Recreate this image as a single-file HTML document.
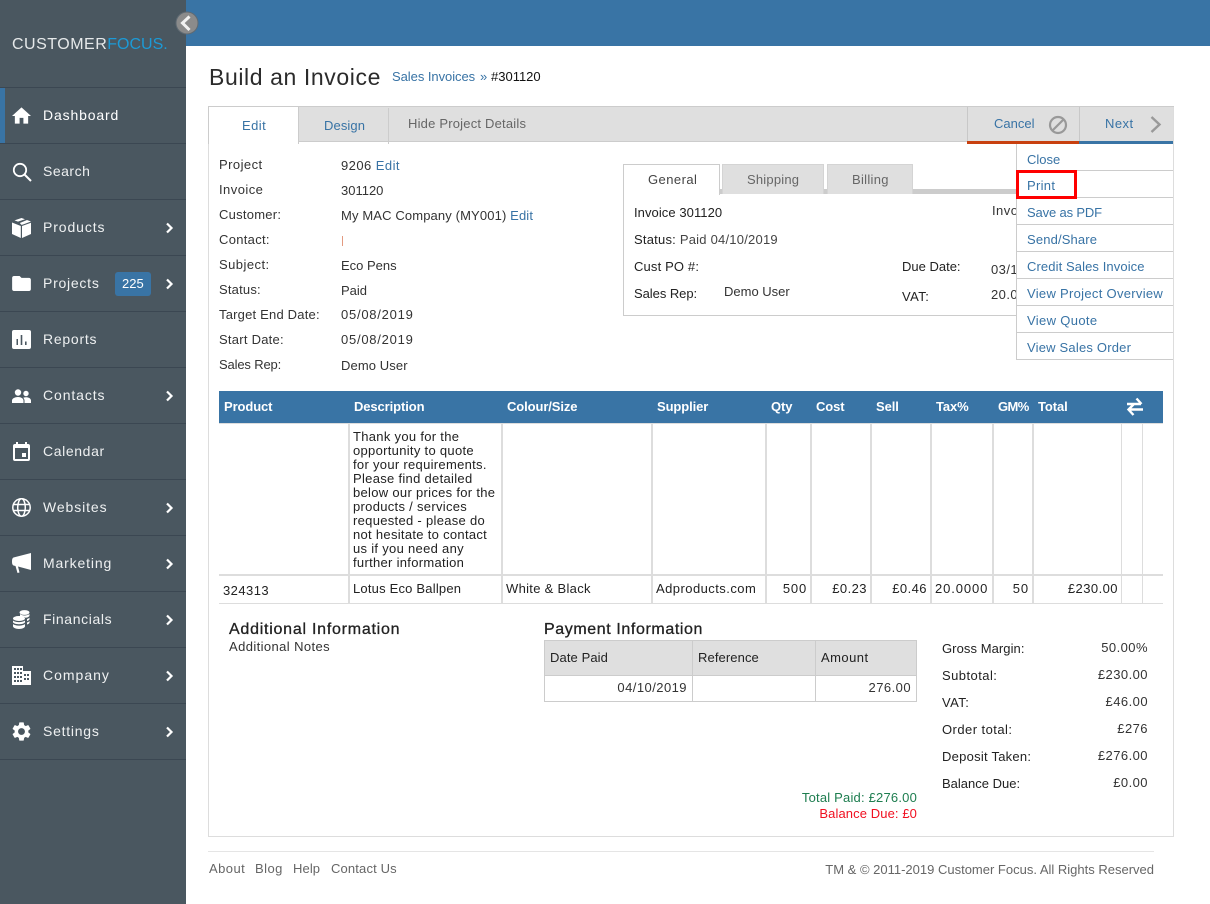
<!DOCTYPE html>
<html><head><meta charset="utf-8"><style>
html,body{margin:0;padding:0;background:#fff}
body{width:1210px;height:904px;position:relative;overflow:hidden;font:13px/16px "Liberation Sans",sans-serif;color:#333}
.t,.r,.b,.n,.i{position:absolute;white-space:nowrap}
.t{letter-spacing:.45px}
.r{letter-spacing:.45px;text-align:right}
.b{background:#ddd}
.l{color:#3873a5}
.h{color:#fff;font-weight:bold;letter-spacing:-.1px}
.n{left:43px;color:#eef0f1;font-size:14px;letter-spacing:.8px;line-height:16px}
.i{left:12px;fill:#fff}
.c{position:absolute;left:165px;width:9px;height:14px}
.s{position:absolute;left:0;width:186px;height:1px;background:#3b4752}
.d{position:absolute;left:1017px;width:156px;height:1px;background:#ccc}
.dt{position:absolute;left:1027px;color:#3873a5;letter-spacing:.2px;white-space:nowrap}
</style></head><body>
<div class="b" style="left:0;top:0;width:186px;height:904px;background:#4a5760"></div>
<div class="b" style="left:186px;top:0;width:1024px;height:46px;background:#3974a5"></div>
<svg class="i" style="left:174px;top:10px;fill:none" width="26" height="26" viewBox="0 0 26 26"><circle cx="13" cy="13" r="11" fill="#8b8b8b" stroke="#5f6a73" stroke-width="1"/><path d="M15.500 6.500L8.500 13l7 7" fill="none" stroke="#f2f2f2" stroke-width="3"/></svg>
<div class="t" style="left:12px;top:36px;font-size:16px;line-height:18px;letter-spacing:.5px;color:#e6e9ea">CUSTOMER<span style="color:#1c9ad6;letter-spacing:0">FOCUS.</span></div>

<div class="s" style="top:87px"></div><div class="s" style="top:143px"></div><div class="s" style="top:199px"></div><div class="s" style="top:255px"></div><div class="s" style="top:311px"></div><div class="s" style="top:367px"></div><div class="s" style="top:423px"></div><div class="s" style="top:479px"></div><div class="s" style="top:535px"></div><div class="s" style="top:591px"></div><div class="s" style="top:647px"></div><div class="s" style="top:703px"></div><div class="s" style="top:759px"></div>
<div class="b" style="left:0;top:88px;width:5px;height:55px;background:#3974a5"></div>

<svg class="i" style="top:107px" width="19" height="17" viewBox="2 3 20 17"><path d="M10 20v-6h4v6h5v-8h3L12 3 2 12h3v8z"/></svg>
<svg class="i" style="top:162px;fill:none" width="20" height="20" viewBox="0 0 20 20"><circle cx="8" cy="8" r="6.200" fill="none" stroke="#fff" stroke-width="1.800"/><path d="M12.500 12.500L19 19" stroke="#fff" stroke-width="2"/></svg>
<svg class="i" style="top:218px" width="19" height="20" viewBox="0 0 19 20"><path d="M9.500 0L13 1.200 6 3.600 2.500 2.400zM15 2l4 1.500L11 6.500 9.500 6.900 7.800 5z"/><path d="M0 4.500L8.800 8v12L0 16zM19 4.800V16l-9 4V8z"/></svg>
<svg class="i" style="top:276px" width="19" height="15" viewBox="2 4 20 16"><path d="M10 4H4c-1.100 0-2 .9-2 2v12c0 1.100.9 2 2 2h16c1.100 0 2-.9 2-2V8c0-1.100-.9-2-2-2h-8z"/></svg>
<svg class="i" style="top:330px" width="19" height="19" viewBox="0 0 19 19"><path fill-rule="evenodd" d="M2 0h15a2 2 0 0 1 2 2v15a2 2 0 0 1-2 2H2a2 2 0 0 1-2-2V2a2 2 0 0 1 2-2zM4.500 9v6H6V9zM8.700 5v10h1.600V5zM13 11.500V15h1.600v-3.500z"/></svg>
<svg class="i" style="top:389px" width="19" height="14" viewBox="0 0 19 14"><circle cx="6" cy="3.500" r="3.200"/><circle cx="14" cy="4.500" r="2.700"/><path d="M0 14v-2.500C0 9.500 3 8 6 8s5.500 1.500 5.500 3.500V14zM12.500 14v-2.500c0-1-.5-2-1.300-2.800.8-.3 1.800-.5 2.800-.5 2.700 0 5 1.300 5 3.300V14z"/></svg>
<svg class="i" style="left:13px;top:442px" width="17" height="19" viewBox="0 0 17 19"><path fill-rule="evenodd" d="M3 0h2v2h7V0h2v2h1a2 2 0 0 1 2 2v13a2 2 0 0 1-2 2H2a2 2 0 0 1-2-2V4a2 2 0 0 1 2-2h1zM2 6v11h13V6zM9 11h4v4H9z"/></svg>
<svg class="i" style="top:498px;fill:none" width="19" height="19" viewBox="0 0 19 19" fill="none" stroke="#fff" stroke-width="1.500"><circle cx="9.500" cy="9.500" r="8.700"/><ellipse cx="9.500" cy="9.500" rx="3.800" ry="8.700"/><path d="M1.500 6.500h16M1.500 12.500h16"/></svg>
<svg class="i" style="top:553px" width="19" height="20" viewBox="0 0 19 20"><path d="M19 0v17L6 13.500 7.500 19.500 5.500 20 3.500 13 1.500 12.500C.5 12 0 11 0 8.500S.5 5 1.500 4.500z"/></svg>
<svg class="i" style="left:13px;top:610px" width="17" height="19" viewBox="0 0 17 19"><ellipse cx="11.500" cy="2.500" rx="5" ry="2.400"/><path d="M16.500 4v1.500c0 1-1.500 2-4 2.300C11.500 7 9 6.700 7 6.500V4c1 1 3 1.500 4.500 1.500S15.500 5 16.500 4zM16.500 7.500V9c0 .8-1 1.500-2.500 2V9c1.200-.3 2-.8 2.500-1.500zM16.500 11v1.500c0 .8-1 1.500-2.500 2v-2c1.200-.3 2-.8 2.500-1.500z"/><ellipse cx="6" cy="8.500" rx="6" ry="2.500"/><path d="M0 10.500c1 1 3.500 1.600 6 1.600s5-.6 6-1.600V12c0 1.200-2.700 2.200-6 2.200S0 13.200 0 12zM0 14c1 1 3.500 1.600 6 1.600s5-.6 6-1.600v2.300C12 17.800 9.300 19 6 19s-6-1.200-6-2.700z"/></svg>
<svg class="i" style="top:666px" width="19" height="19" viewBox="0 0 19 19"><path fill-rule="evenodd" d="M0 0h11v5h8v14H0zM2 2v2h2V2zM5 2v2h2V2zM8 2v2h2V2zM2 6v2h2V6zM5 6v2h2V6zM8 6v2h2V6zM2 10v2h2v-2zM5 10v2h2v-2zM8 10v2h2v-2zM2 14v2h2v-2zM5 14v2h2v-2zM8 14v2h2v-2zM12 8v2h2V8zM15 8v2h2V8zM12 12v2h2v-2zM15 12v2h2v-2z"/></svg>
<svg class="i" style="top:722px" width="19" height="19" viewBox="2.500 2 19 20"><path d="M19.140 12.940c.04-.3.06-.61.06-.94 0-.32-.02-.64-.07-.94l2.030-1.580c.18-.14.23-.41.12-.61l-1.920-3.320c-.12-.22-.37-.29-.59-.22l-2.390.96c-.5-.38-1.030-.7-1.620-.94l-.36-2.540c-.04-.24-.24-.41-.48-.41h-3.840c-.24 0-.43.17-.47.41l-.36 2.540c-.59.24-1.130.57-1.620.94l-2.390-.96c-.22-.08-.47 0-.59.22L2.740 8.870c-.12.21-.08.47.12.61l2.030 1.580c-.05.3-.09.63-.09.94s.02.64.07.94l-2.030 1.580c-.18.14-.23.41-.12.61l1.920 3.320c.12.22.37.29.59.22l2.390-.96c.5.38 1.030.7 1.620.94l.36 2.540c.05.24.24.41.48.41h3.840c.24 0 .44-.17.47-.41l.36-2.540c.59-.24 1.130-.56 1.620-.94l2.390.96c.22.08.47 0 .59-.22l1.920-3.320c.12-.22.07-.47-.12-.61l-2.010-1.580zM12 15.600c-1.980 0-3.600-1.620-3.600-3.600s1.620-3.600 3.600-3.600 3.600 1.620 3.600 3.600-1.620 3.600-3.600 3.600z"/></svg>

<div class="n" style="top:107px;color:#fff;letter-spacing:.85px">Dashboard</div>
<div class="n" style="top:163px;letter-spacing:.5px">Search</div>
<div class="n" style="top:219px;letter-spacing:.9px">Products</div>
<div class="n" style="top:275px;letter-spacing:.75px">Projects</div>
<div class="n" style="top:331px;letter-spacing:.75px">Reports</div>
<div class="n" style="top:387px;letter-spacing:.9px">Contacts</div>
<div class="n" style="top:443px;letter-spacing:.62px">Calendar</div>
<div class="n" style="top:499px;letter-spacing:.9px">Websites</div>
<div class="n" style="top:555px;letter-spacing:.85px">Marketing</div>
<div class="n" style="top:611px;letter-spacing:.62px">Financials</div>
<div class="n" style="top:667px;letter-spacing:1px">Company</div>
<div class="n" style="top:723px;letter-spacing:.75px">Settings</div>
<div class="b" style="left:115px;top:272px;width:36px;height:24px;background:#3974a5;border-radius:3px"></div>
<div class="t" style="left:122px;top:276px;color:#fff;letter-spacing:0">225</div>
<svg class="c" style="top:221px" viewBox="0 0 9 14"><path d="M2 2.500L6.500 7 2 11.500" fill="none" stroke="#fff" stroke-width="2.200"/></svg>
<svg class="c" style="top:277px" viewBox="0 0 9 14"><path d="M2 2.500L6.500 7 2 11.500" fill="none" stroke="#fff" stroke-width="2.200"/></svg>
<svg class="c" style="top:389px" viewBox="0 0 9 14"><path d="M2 2.500L6.500 7 2 11.500" fill="none" stroke="#fff" stroke-width="2.200"/></svg>
<svg class="c" style="top:501px" viewBox="0 0 9 14"><path d="M2 2.500L6.500 7 2 11.500" fill="none" stroke="#fff" stroke-width="2.200"/></svg>
<svg class="c" style="top:557px" viewBox="0 0 9 14"><path d="M2 2.500L6.500 7 2 11.500" fill="none" stroke="#fff" stroke-width="2.200"/></svg>
<svg class="c" style="top:613px" viewBox="0 0 9 14"><path d="M2 2.500L6.500 7 2 11.500" fill="none" stroke="#fff" stroke-width="2.200"/></svg>
<svg class="c" style="top:669px" viewBox="0 0 9 14"><path d="M2 2.500L6.500 7 2 11.500" fill="none" stroke="#fff" stroke-width="2.200"/></svg>
<svg class="c" style="top:725px" viewBox="0 0 9 14"><path d="M2 2.500L6.500 7 2 11.500" fill="none" stroke="#fff" stroke-width="2.200"/></svg>

<div class="t" style="left:209px;top:63px;font-size:23px;line-height:28px;letter-spacing:.6px;color:#2b2b2b">Build an Invoice</div>
<div class="t l" style="left:392px;top:69px;letter-spacing:-.05px">Sales Invoices</div>
<div class="t" style="left:480px;top:69px;color:#3873a5">»</div>
<div class="t" style="left:491px;top:69px;color:#111;letter-spacing:0">#301120</div>

<!-- panel -->
<div class="b" style="left:208px;top:106px;width:964px;height:729px;background:#fff;border:1px solid #ddd"></div>
<div class="b" style="left:209px;top:107px;width:964px;height:34px;background:#dfdfdf"></div>
<div class="b" style="left:298px;top:141px;width:875px;height:1px;background:#ccc"></div>
<div class="b" style="left:208px;top:106px;width:966px;height:1px;background:#ccc"></div>
<div class="b" style="left:209px;top:107px;width:89px;height:36px;background:#fff"></div>
<div class="b" style="left:208px;top:106px;width:1px;height:38px;background:#ccc"></div>
<div class="b" style="left:298px;top:107px;width:1px;height:37px;background:#ccc"></div>
<div class="b" style="left:388px;top:108px;width:1px;height:36px;background:#ccc"></div>
<div class="t l" style="left:242px;top:118px">Edit</div>
<div class="t l" style="left:324px;top:118px;letter-spacing:.1px">Design</div>
<div class="t" style="left:408px;top:116px;color:#666;letter-spacing:.2px">Hide Project Details</div>
<div class="b" style="left:967px;top:107px;width:1px;height:34px;background:#c8c8c8"></div>
<div class="b" style="left:1079px;top:107px;width:1px;height:34px;background:#c8c8c8"></div>
<div class="b" style="left:967px;top:141px;width:112px;height:3px;background:#c8400f"></div>
<div class="b" style="left:1079px;top:141px;width:94px;height:3px;background:#3974a5"></div>
<div class="t l" style="left:994px;top:116px;letter-spacing:0">Cancel</div>
<svg class="i" style="left:1048px;top:115px;fill:none" width="20" height="20" viewBox="0 0 20 20" stroke="#999" stroke-width="2.200"><circle cx="10" cy="10" r="8"/><path d="M4.500 15.500L15.500 4.500"/></svg>
<div class="t l" style="left:1105px;top:116px">Next</div>
<svg class="i" style="left:1150px;top:116px;fill:none" width="12" height="17" viewBox="0 0 12 17" stroke="#999" stroke-width="2.400"><path d="M1.500 1l8 7.500-8 7.500"/></svg>

<!-- left fields -->
<div class="t" style="left:219px;top:157px">Project</div><div class="t" style="left:341px;top:158px">9206 <span class="l">Edit</span></div>
<div class="t" style="left:219px;top:182px">Invoice</div><div class="t" style="left:341px;top:183px;letter-spacing:0">301120</div>
<div class="t" style="left:219px;top:207px;letter-spacing:.25px">Customer:</div><div class="t" style="left:341px;top:208px;letter-spacing:.13px">My MAC Company (MY001) <span class="l">Edit</span></div>
<div class="t" style="left:219px;top:232px;letter-spacing:.3px">Contact:</div><div class="b" style="left:342px;top:236px;width:1px;height:10px;background:#e39a80"></div>
<div class="t" style="left:219px;top:257px">Subject:</div><div class="t" style="left:341px;top:258px;letter-spacing:0">Eco Pens</div>
<div class="t" style="left:219px;top:282px;letter-spacing:.2px">Status:</div><div class="t" style="left:341px;top:283px;letter-spacing:0">Paid</div>
<div class="t" style="left:219px;top:307px;letter-spacing:.2px">Target End Date:</div><div class="t" style="left:341px;top:307px;letter-spacing:.75px">05/08/2019</div>
<div class="t" style="left:219px;top:332px;letter-spacing:.25px">Start Date:</div><div class="t" style="left:341px;top:332px;letter-spacing:.75px">05/08/2019</div>
<div class="t" style="left:219px;top:357px;letter-spacing:-.15px">Sales Rep:</div><div class="t" style="left:341px;top:358px;letter-spacing:.1px">Demo User</div>

<!-- sub tabs -->
<div class="b" style="left:623px;top:193px;width:393px;height:122px;background:#fff;border:1px solid #ccc;border-top:0"></div>
<div class="b" style="left:623px;top:189px;width:393px;height:5px;background:#ccc"></div>
<div class="b" style="left:623px;top:164px;width:95px;height:30px;background:#fff;border:1px solid #ccc;border-bottom:0"></div>
<div class="b" style="left:722px;top:164px;width:100px;height:29px;background:#dfdfdf;border:1px solid #d4d4d4;border-bottom:0"></div>
<div class="b" style="left:827px;top:164px;width:84px;height:29px;background:#dfdfdf;border:1px solid #d4d4d4;border-bottom:0"></div>
<div class="t" style="left:648px;top:172px;color:#444">General</div>
<div class="t" style="left:747px;top:172px;color:#666;letter-spacing:.2px">Shipping</div>
<div class="t" style="left:852px;top:172px;color:#666;letter-spacing:.3px">Billing</div>
<div class="t" style="left:634px;top:205px;color:#222;letter-spacing:.07px">Invoice 301120</div>
<div class="t" style="left:634px;top:232px;color:#222;letter-spacing:.22px">Status: <span style="color:#444">Paid 04/10/2019</span></div>
<div class="t" style="left:634px;top:259px;color:#222;letter-spacing:.15px">Cust PO #:</div>
<div class="t" style="left:634px;top:286px;color:#222;letter-spacing:-.05px">Sales Rep:</div>
<div class="t" style="left:724px;top:284px;letter-spacing:0">Demo User</div>
<div class="t" style="left:902px;top:259px;color:#222;letter-spacing:0">Due Date:</div>
<div class="t" style="left:902px;top:289px;color:#222">VAT:</div>
<div class="t" style="left:992px;top:203px">Invoice</div>
<div class="t" style="left:991px;top:262px">03/10/2019</div>
<div class="t" style="left:991px;top:287px">20.00</div>

<!-- dropdown -->
<div class="b" style="left:1016px;top:144px;width:157px;height:215px;background:#fff;border-left:1px solid #ccc;border-bottom:1px solid #ccc"></div>
<div class="b" style="left:1173px;top:144px;width:1px;height:216px;background:#ddd"></div>
<div class="d" style="top:170px"></div><div class="d" style="top:197px"></div><div class="d" style="top:224px"></div><div class="d" style="top:251px"></div><div class="d" style="top:278px"></div><div class="d" style="top:305px"></div><div class="d" style="top:332px"></div>
<div class="dt" style="top:152px;letter-spacing:0">Close</div>
<div class="dt" style="top:178px;letter-spacing:.3px">Print</div>
<div class="dt" style="top:205px;letter-spacing:-.15px">Save as PDF</div>
<div class="dt" style="top:232px;letter-spacing:.15px">Send/Share</div>
<div class="dt" style="top:259px;letter-spacing:.1px">Credit Sales Invoice</div>
<div class="dt" style="top:286px;letter-spacing:.3px">View Project Overview</div>
<div class="dt" style="top:313px;letter-spacing:.35px">View Quote</div>
<div class="dt" style="top:340px;letter-spacing:.2px">View Sales Order</div>
<div class="b" style="left:1016px;top:170px;width:55px;height:23px;background:none;border:3px solid #f00"></div>

<!-- table -->
<div class="b" style="left:219px;top:391px;width:944px;height:32px;background:#3974a5"></div>
<div class="t h" style="left:224px;top:399px">Product</div>
<div class="t h" style="left:354px;top:399px">Description</div>
<div class="t h" style="left:507px;top:399px">Colour/Size</div>
<div class="t h" style="left:657px;top:399px">Supplier</div>
<div class="t h" style="left:771px;top:399px">Qty</div>
<div class="t h" style="left:816px;top:399px">Cost</div>
<div class="t h" style="left:876px;top:399px">Sell</div>
<div class="t h" style="left:936px;top:399px">Tax%</div>
<div class="t h" style="left:998px;top:399px;letter-spacing:-.6px">GM%</div>
<div class="t h" style="left:1038px;top:399px">Total</div>
<svg class="i" style="left:1126px;top:397px;fill:none" width="18" height="19" viewBox="0 0 18 19" stroke="#fff" stroke-width="2.400"><path d="M1 7h14M10.500 1.500L15.500 7M17 12.500H3M7.500 7.500L2.500 12.500 7.500 18"/></svg>
<div class="b" style="left:219px;top:423px;width:944px;height:1px"></div>
<div class="b" style="left:219px;top:574px;width:944px;height:2px"></div>
<div class="b" style="left:219px;top:603px;width:944px;height:1px"></div>
<div class="b" style="left:348px;top:424px;width:2px;height:179px"></div>
<div class="b" style="left:501px;top:424px;width:2px;height:179px"></div>
<div class="b" style="left:651px;top:424px;width:2px;height:179px"></div>
<div class="b" style="left:765px;top:424px;width:2px;height:179px"></div>
<div class="b" style="left:810px;top:424px;width:2px;height:179px"></div>
<div class="b" style="left:870px;top:424px;width:2px;height:179px"></div>
<div class="b" style="left:930px;top:424px;width:2px;height:179px"></div>
<div class="b" style="left:992px;top:424px;width:2px;height:179px"></div>
<div class="b" style="left:1032px;top:424px;width:2px;height:179px"></div>
<div class="b" style="left:1121px;top:424px;width:1px;height:179px"></div>
<div class="b" style="left:1142px;top:424px;width:1px;height:179px"></div>
<div class="t" style="left:353px;top:430px;line-height:14px;color:#222;letter-spacing:.3px">Thank you for the<br>opportunity to quote<br>for your requirements.<br>Please find detailed<br>below our prices for the<br>products / services<br>requested - please do<br>not hesitate to contact<br>us if you need any<br>further information</div>
<div class="t" style="left:223px;top:583px;color:#222">324313</div>
<div class="t" style="left:353px;top:581px;color:#222;letter-spacing:.2px">Lotus Eco Ballpen</div>
<div class="t" style="left:506px;top:581px;color:#222;letter-spacing:.3px">White &amp; Black</div>
<div class="t" style="left:656px;top:581px;color:#222">Adproducts.com</div>
<div class="r" style="right:403px;top:581px;color:#222;letter-spacing:.8px">500</div>
<div class="r" style="right:343px;top:581px;color:#222">£0.23</div>
<div class="r" style="right:283px;top:581px;color:#222">£0.46</div>
<div class="t" style="left:935px;top:581px;color:#222;letter-spacing:.9px">20.0000</div>
<div class="r" style="right:181px;top:581px;color:#222;letter-spacing:.9px">50</div>
<div class="r" style="right:92px;top:581px;color:#222">£230.00</div>

<!-- bottom -->
<div class="t" style="left:229px;top:622px;font-size:16px;letter-spacing:.75px;color:#222;-webkit-text-stroke:.3px #222">Additional Information</div>
<div class="t" style="left:229px;top:639px;color:#333;letter-spacing:.4px">Additional Notes</div>
<div class="t" style="left:544px;top:622px;font-size:16px;letter-spacing:.6px;color:#222;-webkit-text-stroke:.3px #222">Payment Information</div>
<div class="b" style="left:544px;top:640px;width:371px;height:60px;background:#fff;border:1px solid #ccc"></div>
<div class="b" style="left:545px;top:641px;width:371px;height:34px;background:#dfdfdf"></div>
<div class="b" style="left:545px;top:675px;width:371px;height:1px;background:#ccc"></div>
<div class="b" style="left:692px;top:641px;width:1px;height:60px;background:#ccc"></div>
<div class="b" style="left:815px;top:641px;width:1px;height:60px;background:#ccc"></div>
<div class="t" style="left:550px;top:650px;color:#222;letter-spacing:.1px">Date Paid</div>
<div class="t" style="left:698px;top:650px;color:#222;letter-spacing:.1px">Reference</div>
<div class="t" style="left:821px;top:650px;color:#222">Amount</div>
<div class="r" style="right:523px;top:680px">04/10/2019</div>
<div class="r" style="right:299px;top:680px">276.00</div>
<div class="t" style="left:942px;top:641px;color:#222;letter-spacing:.07px">Gross Margin:</div><div class="r" style="right:62px;top:640px">50.00%</div>
<div class="t" style="left:942px;top:668px;color:#222">Subtotal:</div><div class="r" style="right:62px;top:667px">£230.00</div>
<div class="t" style="left:942px;top:695px;color:#222">VAT:</div><div class="r" style="right:62px;top:694px">£46.00</div>
<div class="t" style="left:942px;top:722px;color:#222">Order total:</div><div class="r" style="right:62px;top:721px">£276</div>
<div class="t" style="left:942px;top:749px;color:#222;letter-spacing:.25px">Deposit Taken:</div><div class="r" style="right:62px;top:748px">£276.00</div>
<div class="t" style="left:942px;top:776px;color:#222;letter-spacing:0">Balance Due:</div><div class="r" style="right:62px;top:775px">£0.00</div>
<div class="r" style="right:293px;top:790px;color:#1d7d4f;letter-spacing:.2px">Total Paid: £276.00</div>
<div class="r" style="right:293px;top:806px;color:#f01020;letter-spacing:.1px">Balance Due: £0</div>

<!-- footer -->
<div class="b" style="left:208px;top:851px;width:946px;height:1px;background:#e5e5e5"></div>
<div class="t" style="left:209px;top:861px;color:#666">About</div>
<div class="t" style="left:255px;top:861px;color:#666">Blog</div>
<div class="t" style="left:293px;top:861px;color:#666;letter-spacing:.1px">Help</div>
<div class="t" style="left:331px;top:861px;color:#666;letter-spacing:.15px">Contact Us</div>
<div class="r" style="right:56px;top:862px;color:#666;letter-spacing:0">TM &amp; © 2011-2019 Customer Focus. All Rights Reserved</div>
</body></html>
